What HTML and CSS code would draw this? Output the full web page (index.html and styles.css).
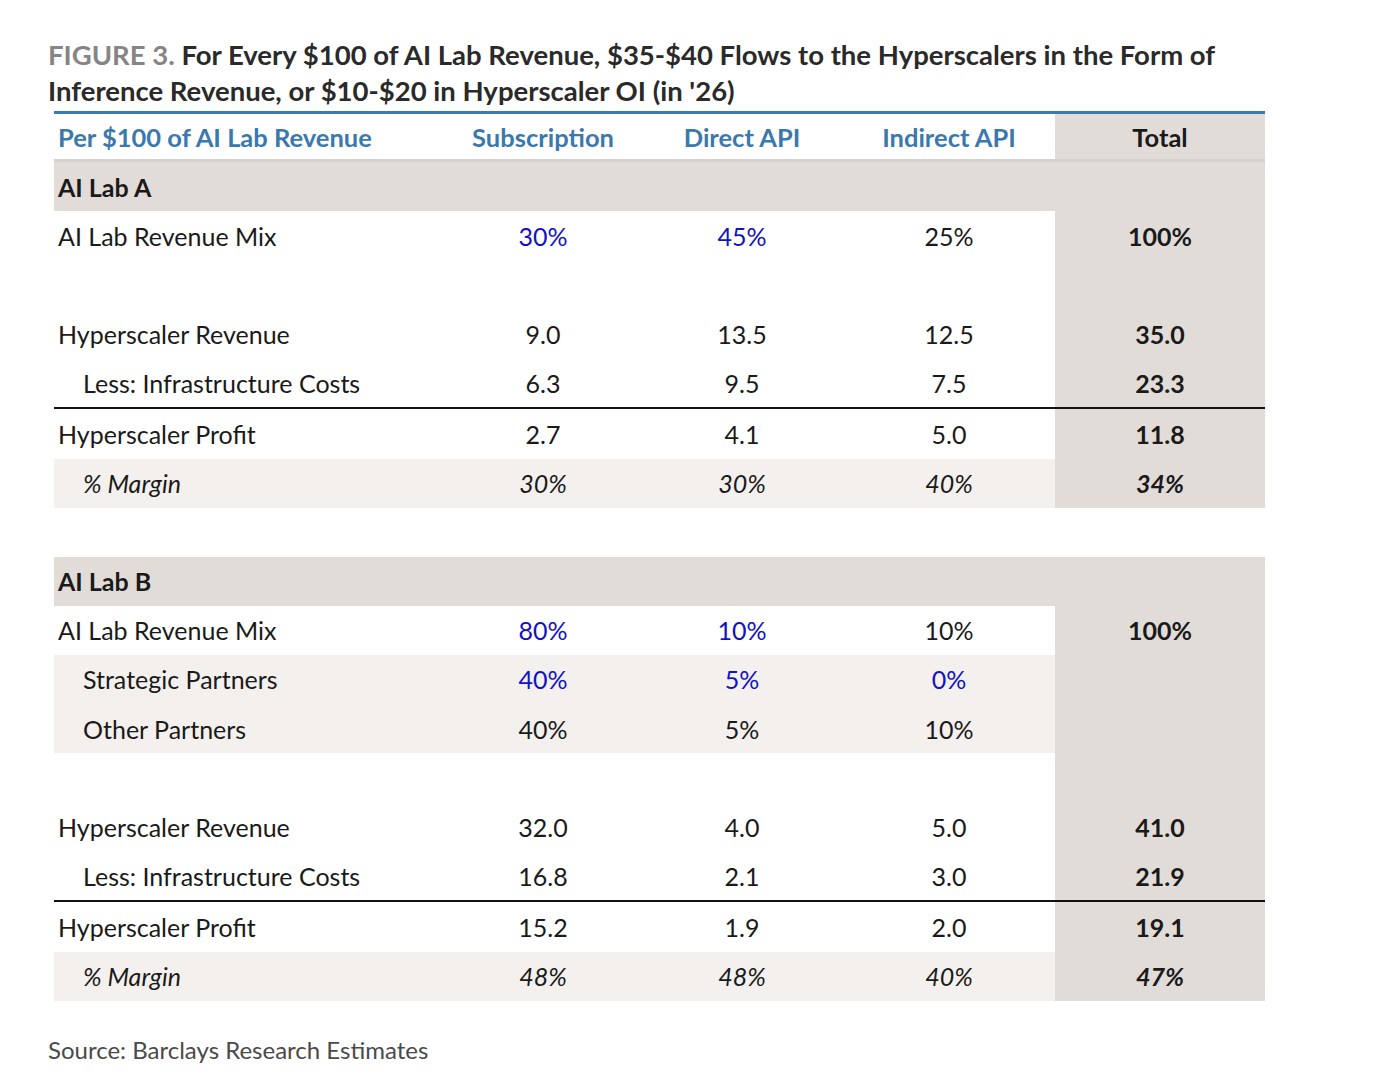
FILE: index.html
```html
<!DOCTYPE html>
<html lang="en">
<head>
    <meta charset="UTF-8">
    <title>Figure 3 - Hyperscaler Revenue per $100 of AI Lab Revenue</title>
    <link rel="stylesheet" href="styles.css">
</head>
<body>
    <div class="figure">
        <h1 class="title"><span class="fig-num">FIGURE 3.</span> For Every $100 of AI Lab Revenue, $35-$40 Flows to the Hyperscalers in the Form of<br>Inference Revenue, or $10-$20 in Hyperscaler OI (in '26)</h1>

        <table class="data">
            <colgroup>
                <col class="c-label">
                <col class="c-sub">
                <col class="c-direct">
                <col class="c-indirect">
                <col class="c-total">
            </colgroup>
            <thead>
                <tr>
                    <th class="label">Per $100 of AI Lab Revenue</th>
                    <th>Subscription</th>
                    <th>Direct API</th>
                    <th>Indirect API</th>
                    <th class="total">Total</th>
                </tr>
            </thead>
            <tbody>
                <tr class="section">
                    <td class="label" colspan="5">AI Lab A</td>
                </tr>
                <tr>
                    <td class="label">AI Lab Revenue Mix</td>
                    <td class="input">30%</td>
                    <td class="input">45%</td>
                    <td>25%</td>
                    <td class="total">100%</td>
                </tr>
                <tr class="empty">
                    <td></td><td></td><td></td><td></td><td class="total"></td>
                </tr>
                <tr>
                    <td class="label">Hyperscaler Revenue</td>
                    <td>9.0</td>
                    <td>13.5</td>
                    <td>12.5</td>
                    <td class="total">35.0</td>
                </tr>
                <tr class="ruled">
                    <td class="label indent">Less: Infrastructure Costs</td>
                    <td>6.3</td>
                    <td>9.5</td>
                    <td>7.5</td>
                    <td class="total">23.3</td>
                </tr>
                <tr>
                    <td class="label">Hyperscaler Profit</td>
                    <td>2.7</td>
                    <td>4.1</td>
                    <td>5.0</td>
                    <td class="total">11.8</td>
                </tr>
                <tr class="shaded margin">
                    <td class="label indent">% Margin</td>
                    <td>30%</td>
                    <td>30%</td>
                    <td>40%</td>
                    <td class="total">34%</td>
                </tr>
                <tr class="gap">
                    <td colspan="5"></td>
                </tr>
                <tr class="section">
                    <td class="label" colspan="5">AI Lab B</td>
                </tr>
                <tr>
                    <td class="label">AI Lab Revenue Mix</td>
                    <td class="input">80%</td>
                    <td class="input">10%</td>
                    <td>10%</td>
                    <td class="total">100%</td>
                </tr>
                <tr class="shaded">
                    <td class="label indent">Strategic Partners</td>
                    <td class="input">40%</td>
                    <td class="input">5%</td>
                    <td class="input">0%</td>
                    <td class="total"></td>
                </tr>
                <tr class="shaded">
                    <td class="label indent">Other Partners</td>
                    <td>40%</td>
                    <td>5%</td>
                    <td>10%</td>
                    <td class="total"></td>
                </tr>
                <tr class="empty">
                    <td></td><td></td><td></td><td></td><td class="total"></td>
                </tr>
                <tr>
                    <td class="label">Hyperscaler Revenue</td>
                    <td>32.0</td>
                    <td>4.0</td>
                    <td>5.0</td>
                    <td class="total">41.0</td>
                </tr>
                <tr class="ruled">
                    <td class="label indent">Less: Infrastructure Costs</td>
                    <td>16.8</td>
                    <td>2.1</td>
                    <td>3.0</td>
                    <td class="total">21.9</td>
                </tr>
                <tr>
                    <td class="label">Hyperscaler Profit</td>
                    <td>15.2</td>
                    <td>1.9</td>
                    <td>2.0</td>
                    <td class="total">19.1</td>
                </tr>
                <tr class="shaded margin">
                    <td class="label indent">% Margin</td>
                    <td>48%</td>
                    <td>48%</td>
                    <td>40%</td>
                    <td class="total">47%</td>
                </tr>
            </tbody>
        </table>

        <p class="source">Source: Barclays Research Estimates</p>
    </div>
</body>
</html>
```

FILE: styles.css
```css
body {
    margin: 0;
    background-color: #fff;
    font-family: Lato, "Noto Sans", sans-serif;
    color: #1a1a1a;
}
.figure {
    padding: 37px 0 0 48px;
}
.title {
    margin: 0;
    font-size: 27.5px;
    line-height: 36px;
    font-weight: 700;
    color: #2a2a2a;
}
.fig-num {
    color: #858585;
}
.data {
    margin: 2px 0 0 6px;
    width: 1211px;
    table-layout: fixed;
    border-collapse: collapse;
    border-top: 3px solid #3d7bad;
    font-size: 25px;
}
.c-label { width: 391px; }
.c-sub { width: 196px; }
.c-direct { width: 202px; }
.c-indirect { width: 212px; }
.c-total { width: 210px; }

.data th {
    height: 45px;
    padding: 0;
    font-size: 25.5px;
    color: #3a79ae;
    font-weight: 700;
    text-align: center;
    border-bottom: 3px solid #d4d1cf;
}
.data th.total {
    color: #1a1a1a;
}
.data td {
    height: 49.1px;
    padding: 0;
    text-align: center;
}
.data .label {
    text-align: left;
    padding-left: 4px;
}
.data .indent {
    padding-left: 29px;
}
.data .total {
    background-color: #e2dcd9;
    font-weight: 700;
}
.data .input {
    color: #1212c4;
}
.section td {
    background-color: #e2dcd9;
    font-weight: 700;
}
.shaded td {
    background-color: #f3f0ee;
}
.shaded td.total {
    background-color: #e2dcd9;
}
.margin td {
    font-style: italic;
}
.ruled td {
    border-bottom: 2px solid #111;
}
.gap td {
    background-color: #fff;
}
.source {
    margin: 34px 0 0;
    font-size: 24px;
    line-height: 30px;
    color: #4a4a4a;
}
```
